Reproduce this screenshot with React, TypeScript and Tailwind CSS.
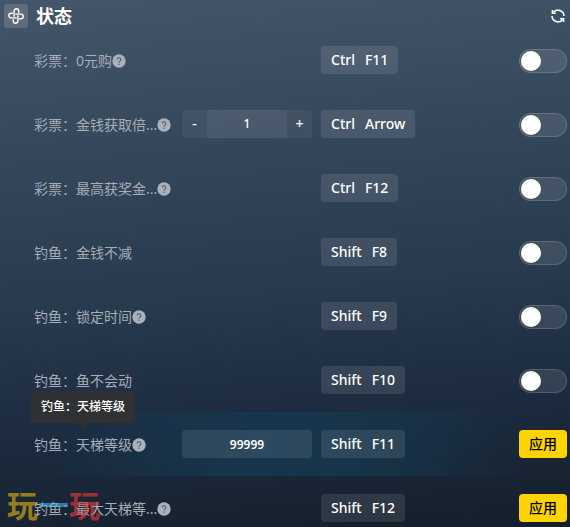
import { useState } from "react";

interface Cheat {
  id: string;
  group: string;
  name: string;
  keys: [string, string];
  type: "toggle" | "stepper" | "input";
  help?: boolean;
  value?: string;
  active?: boolean;
}

const CHEATS: Cheat[] = [
  { id: "free", group: "彩票", name: "0元购", keys: ["Ctrl", "F11"], type: "toggle", help: true },
  { id: "rate", group: "彩票", name: "金钱获取倍...", keys: ["Ctrl", "Arrow"], type: "stepper", help: true, value: "1" },
  { id: "max-prize", group: "彩票", name: "最高获奖金...", keys: ["Ctrl", "F12"], type: "toggle", help: true },
  { id: "money", group: "钓鱼", name: "金钱不减", keys: ["Shift", "F8"], type: "toggle" },
  { id: "time", group: "钓鱼", name: "锁定时间", keys: ["Shift", "F9"], type: "toggle", help: true },
  { id: "fish", group: "钓鱼", name: "鱼不会动", keys: ["Shift", "F10"], type: "toggle" },
  { id: "rank", group: "钓鱼", name: "天梯等级", keys: ["Shift", "F11"], type: "input", help: true, value: "99999", active: true },
  { id: "max-rank", group: "钓鱼", name: "最大天梯等...", keys: ["Shift", "F12"], type: "input", help: true },
];

// ─── Icons ────────────────────────────────────────────────────────────────────
function KnotIcon() {
  return (
    <svg viewBox="0 0 16 16" className="size-4" fill="none" stroke="currentColor" strokeWidth="1.4" strokeLinecap="round">
      <path d="M6.1 8.2V3.1a2.3 2.3 0 0 1 4.6 0v1.3" />
      <path d="M7.8 6.1h5.1a2.3 2.3 0 0 1 0 4.6h-1.3" />
      <path d="M9.9 7.8v5.1a2.3 2.3 0 0 1-4.6 0v-1.3" />
      <path d="M8.2 9.9H3.1a2.3 2.3 0 0 1 0-4.6h1.3" />
    </svg>
  );
}

function RefreshIcon() {
  return (
    <svg viewBox="0 0 14 14" className="size-3.5" fill="none" stroke="currentColor" strokeWidth="1.6">
      <path d="M2.2 3.6A6 6 0 0 1 13 7M11.8 10.4A6 6 0 0 1 1 7" />
      <path d="M1.4 1v3.2h3.4M12.6 13V9.8H9.2" />
    </svg>
  );
}

function HelpIcon() {
  return (
    <svg viewBox="0 0 14 14" className="size-3.5 shrink-0">
      <circle cx="7" cy="7" r="6.7" fill="#a9b1ba" />
      <path d="M5.2 5.6a1.8 1.8 0 1 1 2.7 1.5c-.6.4-.9.6-.9 1.3" fill="none" stroke="#4d5c6c" strokeWidth="1.1" />
      <circle cx="7" cy="10.2" r=".7" fill="#4d5c6c" />
    </svg>
  );
}

// ─── Controls ─────────────────────────────────────────────────────────────────
function Toggle({ label }: { label: string }) {
  const [on, setOn] = useState(false);

  return (
    <label className="flex cursor-pointer items-center pt-0.5">
      <input
        type="checkbox"
        role="switch"
        aria-label={label}
        checked={on}
        onChange={() => setOn(!on)}
        className="h-6 w-12 cursor-pointer appearance-none rounded-full border border-white/15 bg-white/10 p-px before:block before:size-5 before:rounded-full before:bg-white checked:bg-[#ffd400] checked:before:translate-x-6"
      />
    </label>
  );
}

function Stepper({ label, initial }: { label: string; initial: string }) {
  const [value, setValue] = useState(initial);
  const step = (n: number) => setValue(String(Number(value) + n));

  return (
    <div className="flex h-7 w-full overflow-hidden rounded bg-white/5 text-sm font-medium text-white">
      <button onClick={() => step(-1)} className="w-[25px]" aria-label="减少">
        -
      </button>
      <input
        aria-label={label}
        value={value}
        onChange={(e) => setValue(e.target.value)}
        className="min-w-0 flex-1 bg-white/5 text-center text-xs outline-none"
      />
      <button onClick={() => step(1)} className="w-[25px]" aria-label="增加">
        +
      </button>
    </div>
  );
}

function Row({ cheat }: { cheat: Cheat }) {
  const label = `${cheat.group}：${cheat.name}`;

  return (
    <li
      className={
        cheat.active
          ? "flex h-16 items-center bg-[linear-gradient(90deg,transparent_5%,#17364e_45%,#17344a_62%,transparent_92%)] pr-[3px] pl-[34px]"
          : "flex h-16 items-center pr-[3px] pl-[34px]"
      }
    >
      <div className="relative flex w-[148px] shrink-0 items-center pt-0.5">
        <span className="text-sm whitespace-nowrap text-[#a6adb6]">{label}</span>
        {cheat.help && <HelpIcon />}
        {cheat.active && (
          <div
            role="tooltip"
            className="absolute bottom-full -left-[3px] mb-2.5 rounded bg-[#303133] px-2.5 py-2 text-xs leading-4 font-medium whitespace-nowrap text-white"
          >
            {label}
            <span className="absolute -bottom-1 left-12 size-2 rotate-45 bg-[#303133]" />
          </div>
        )}
      </div>

      <div className="w-[130px] shrink-0">
        {cheat.type === "stepper" && <Stepper label={label} initial={cheat.value ?? "0"} />}
        {cheat.type === "input" && cheat.value && (
          <input
            aria-label={label}
            defaultValue={cheat.value}
            className="block h-7 w-full rounded bg-white/10 text-center text-xs font-semibold text-white outline-none"
          />
        )}
      </div>

      <button className="ml-[9px] flex h-7 items-center gap-2.5 rounded bg-white/10 px-2.5 text-sm font-medium text-white">
        <kbd className="font-[inherit]">{cheat.keys[0]}</kbd>
        <kbd className="font-[inherit]">{cheat.keys[1]}</kbd>
      </button>

      <div className="ml-auto">
        {cheat.type === "input" ? (
          <button className="block h-7 w-12 rounded bg-[#ffd400] text-sm font-medium text-black">应用</button>
        ) : (
          <Toggle label={label} />
        )}
      </div>
    </li>
  );
}

// ─── Watermark ────────────────────────────────────────────────────────────────
function Watermark() {
  return (
    <div className="pointer-events-none absolute bottom-1 left-[7px] flex text-[31px] leading-9 font-bold opacity-60" aria-hidden="true">
      <span className="text-[#e8b80e]">玩</span>
      <span className="text-[#4fb3f0]">一</span>
      <span className="text-[#ee3b3b]">玩</span>
    </div>
  );
}

export default function App() {
  return (
    <main className="relative h-screen overflow-hidden bg-[linear-gradient(175deg,#43566a_0%,#34465a_30%,#283a4e_55%,#1c2b3f_77%,#151f2a_100%)] font-['Noto_Sans','Noto_Sans_CJK_SC',sans-serif]">
      <header className="flex h-7 items-end gap-2 pr-[5px] pl-1 text-white">
        <span className="flex size-6 items-center justify-center rounded bg-white/15">
          <KnotIcon />
        </span>
        <h1 className="text-lg leading-6 font-bold">状态</h1>
        <button className="ml-auto flex h-6 items-center" aria-label="刷新">
          <RefreshIcon />
        </button>
      </header>
      <ul>
        {CHEATS.map((cheat) => (
          <Row key={cheat.id} cheat={cheat} />
        ))}
      </ul>
      <Watermark />
    </main>
  );
}
